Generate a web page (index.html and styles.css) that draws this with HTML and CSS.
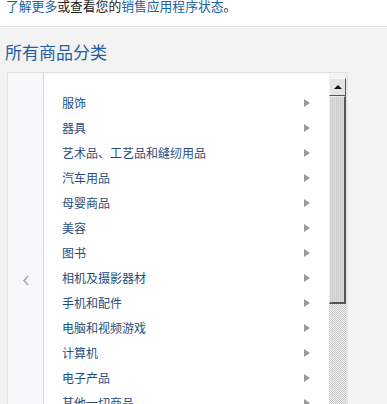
FILE: index.html
```html
<!DOCTYPE html>
<html lang="zh-CN">

<head>
	<meta charset="UTF-8" />
	<meta name="viewport" content="width=device-width, initial-scale=1.0" />
	<title>所有商品分类</title>
	<link rel="stylesheet" href="styles.css">
</head>

<body>
	<div class="topbar">
		<p class="notice"><a href="javascript:;">了解更多</a>或查看您的<a href="javascript:;">销售应用程序状态</a>。</p>
	</div>
	<h2 class="title">所有商品分类</h2>
	<div class="panel">
		<div class="nav">
			<a class="prev" href="javascript:;">
				<svg width="8" height="11" viewBox="0 0 8 11"><path d="M6 1 L2 5.5 L6 10" fill="none" stroke="#a8a8a8" stroke-width="1.6" /></svg>
			</a>
		</div>
		<ul class="cats">
			<li><a href="javascript:;">服饰</a><i class="arr"></i></li>
			<li><a href="javascript:;">器具</a><i class="arr"></i></li>
			<li><a href="javascript:;">艺术品、工艺品和缝纫用品</a><i class="arr"></i></li>
			<li><a href="javascript:;">汽车用品</a><i class="arr"></i></li>
			<li><a href="javascript:;">母婴商品</a><i class="arr"></i></li>
			<li><a href="javascript:;">美容</a><i class="arr"></i></li>
			<li><a href="javascript:;">图书</a><i class="arr"></i></li>
			<li><a href="javascript:;">相机及摄影器材</a><i class="arr"></i></li>
			<li><a href="javascript:;">手机和配件</a><i class="arr"></i></li>
			<li><a href="javascript:;">电脑和视频游戏</a><i class="arr"></i></li>
			<li><a href="javascript:;">计算机</a><i class="arr"></i></li>
			<li><a href="javascript:;">电子产品</a><i class="arr"></i></li>
			<li><a href="javascript:;">其他一切商品</a><i class="arr"></i></li>
		</ul>
		<div class="sbar">
			<div class="sbtn"><i class="up"></i></div>
			<div class="thumb"></div>
			<div class="track"></div>
		</div>
		<div class="edge"></div>
	</div>
</body>

</html>
```

FILE: styles.css
```css
* {
	margin: 0;
	padding: 0;
	list-style: none;
}

html,
body {
	overflow: hidden;
	height: 100%;
}

body {
	background-color: #f3f3f3;
	font-family: "Noto Sans CJK SC", "Noto Sans", sans-serif;
	color: #222;
}

a {
	text-decoration: none;
}

.topbar {
	height: 28px;
	background-color: #fff;
	border-bottom: 1px solid #e2e2e2;
}

.notice {
	font-size: 12.8px;
	line-height: 16px;
	margin-top: -2px;
	padding-left: 6px;
	color: #222;
}

.notice a {
	color: #1d5f9e;
}

.title {
	font-size: 17px;
	font-weight: normal;
	line-height: 24px;
	color: #215f9d;
	padding: 13px 0 0 5px;
	height: 32px;
}

.panel {
	display: flex;
	margin-left: 7px;
	width: 341px;
	height: 400px;
	border-top: 1px solid #e0e0e0;
}

.nav {
	width: 35px;
	background-color: #f8f8fa;
	border-left: 1px solid #e4e4e6;
	border-right: 1px solid #d6d6d6;
	padding-top: 194px;
	display: flex;
	justify-content: center;
	align-items: flex-start;
}

.prev {
	display: block;
	height: 11px;
}

.cats {
	flex: 1;
	background-color: #fff;
	padding: 17px 19px 0 18px;
}

.cats li {
	display: flex;
	align-items: center;
	justify-content: space-between;
	height: 25px;
	font-size: 12px;
}

.cats li a {
	color: #1f4d7d;
}

.arr {
	width: 0;
	height: 0;
	border-top: 4.5px solid transparent;
	border-bottom: 4.5px solid transparent;
	border-left: 6px solid #9a9a9a;
}

.sbar {
	width: 17px;
	margin-top: 5px;
	display: flex;
	flex-direction: column;
	background-color: #fff;
}

.sbtn {
	height: 16px;
	background-color: #e4e4e4;
	border-top: 1px solid #f4f4f4;
	border-left: 1px solid #f4f4f4;
	border-right: 1px solid #555;
	border-bottom: 1px solid #555;
	display: flex;
	align-items: center;
	justify-content: center;
}

.up {
	width: 0;
	height: 0;
	border-left: 4px solid transparent;
	border-right: 4px solid transparent;
	border-bottom: 4px solid #111;
}

.thumb {
	height: 205px;
	background: repeating-linear-gradient(90deg, #cfcfcf 0 1px, #dadada 1px 2px);
	border-top: 1px solid #eee;
	border-left: 1px solid #eee;
	border-right: 2px solid #555;
	border-bottom: 2px solid #555;
}

.track {
	flex: 1;
	background: repeating-conic-gradient(#c4c4c4 0 25%, #f4f4f4 0 50%) 0 0 / 2px 2px;
}

.edge {
	width: 2px;
	background-color: #e6e6e6;
}
```
